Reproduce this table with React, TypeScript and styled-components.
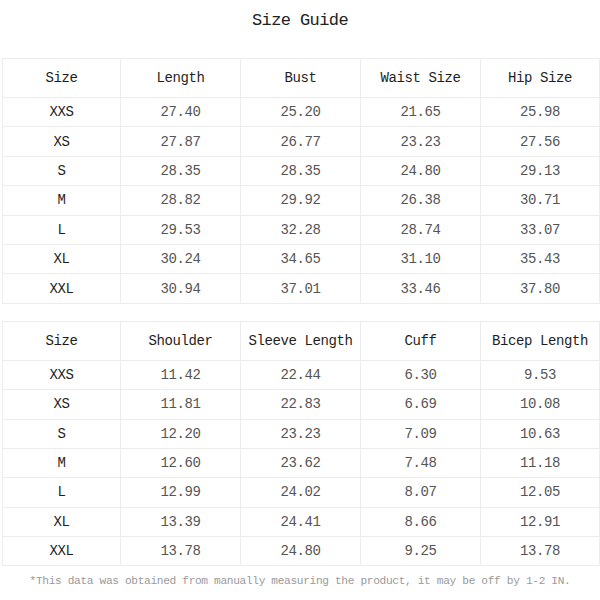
import React from "react";
import styled, { createGlobalStyle } from "styled-components";

const Global = createGlobalStyle`
  html, body { margin: 0; padding: 0; background: #fff; }
  body { font-family: "Liberation Mono", "DejaVu Sans Mono", monospace; }
`;

const Page = styled.div`
  width: 600px;
  height: 600px;
  display: flex;
  flex-direction: column;
  background: #fff;
`;

const Title = styled.div`
  height: 42px;
  line-height: 42px;
  text-align: center;
  font-size: 17px;
  letter-spacing: -0.6px;
  color: #222;
`;

const Table = styled.table<{ $gap: number }>`
  margin: ${(p) => p.$gap}px 0 0 2px;
  width: 597px;
  border-collapse: collapse;
  table-layout: fixed;
`;

const Col = styled.col<{ $w: number }>`
  width: ${(p) => p.$w}px;
`;

const HeadCell = styled.th`
  height: 38px;
  padding: 0;
  border: 1px solid #ececec;
  font-weight: normal;
  font-size: 14px;
  letter-spacing: -0.4px;
  color: #1e1e1e;
  text-align: center;
`;

const Cell = styled.td`
  height: 28.4px;
  padding: 0;
  border: 1px solid #ececec;
  font-size: 14px;
  letter-spacing: -0.4px;
  color: #555;
  text-align: center;
`;

const SizeCell = styled(Cell)`
  color: #1e1e1e;
`;

const Note = styled.div`
  height: 30px;
  line-height: 30px;
  text-align: center;
  font-size: 11.2px;
  letter-spacing: -0.35px;
  color: #9a9a9a;
`;

const sizes = ["XXS", "XS", "S", "M", "L", "XL", "XXL"];
const colWidths = [118, 120, 120, 120, 119];

const t1 = {
  head: ["Size", "Length", "Bust", "Waist Size", "Hip Size"],
  rows: [
    ["27.40", "25.20", "21.65", "25.98"],
    ["27.87", "26.77", "23.23", "27.56"],
    ["28.35", "28.35", "24.80", "29.13"],
    ["28.82", "29.92", "26.38", "30.71"],
    ["29.53", "32.28", "28.74", "33.07"],
    ["30.24", "34.65", "31.10", "35.43"],
    ["30.94", "37.01", "33.46", "37.80"],
  ],
};

const t2 = {
  head: ["Size", "Shoulder", "Sleeve Length", "Cuff", "Bicep Length"],
  rows: [
    ["11.42", "22.44", "6.30", "9.53"],
    ["11.81", "22.83", "6.69", "10.08"],
    ["12.20", "23.23", "7.09", "10.63"],
    ["12.60", "23.62", "7.48", "11.18"],
    ["12.99", "24.02", "8.07", "12.05"],
    ["13.39", "24.41", "8.66", "12.91"],
    ["13.78", "24.80", "9.25", "13.78"],
  ],
};

function SizeTable({ data, gap }: { data: { head: string[]; rows: string[][] }; gap: number }) {
  return (
    <Table $gap={gap}>
      <colgroup>
        {colWidths.map((w, i) => (
          <Col key={i} $w={w} />
        ))}
      </colgroup>
      <thead>
        <tr>
          {data.head.map((h) => (
            <HeadCell key={h}>{h}</HeadCell>
          ))}
        </tr>
      </thead>
      <tbody>
        {data.rows.map((r, i) => (
          <tr key={sizes[i]}>
            <SizeCell>{sizes[i]}</SizeCell>
            {r.map((v, j) => (
              <Cell key={j}>{v}</Cell>
            ))}
          </tr>
        ))}
      </tbody>
    </Table>
  );
}

export default function App() {
  return (
    <Page>
      <Global />
      <Title>Size Guide</Title>
      <SizeTable data={t1} gap={16} />
      <SizeTable data={t2} gap={17} />
      <Note>*This data was obtained from manually measuring the product, it may be off by 1-2 IN.</Note>
    </Page>
  );
}
